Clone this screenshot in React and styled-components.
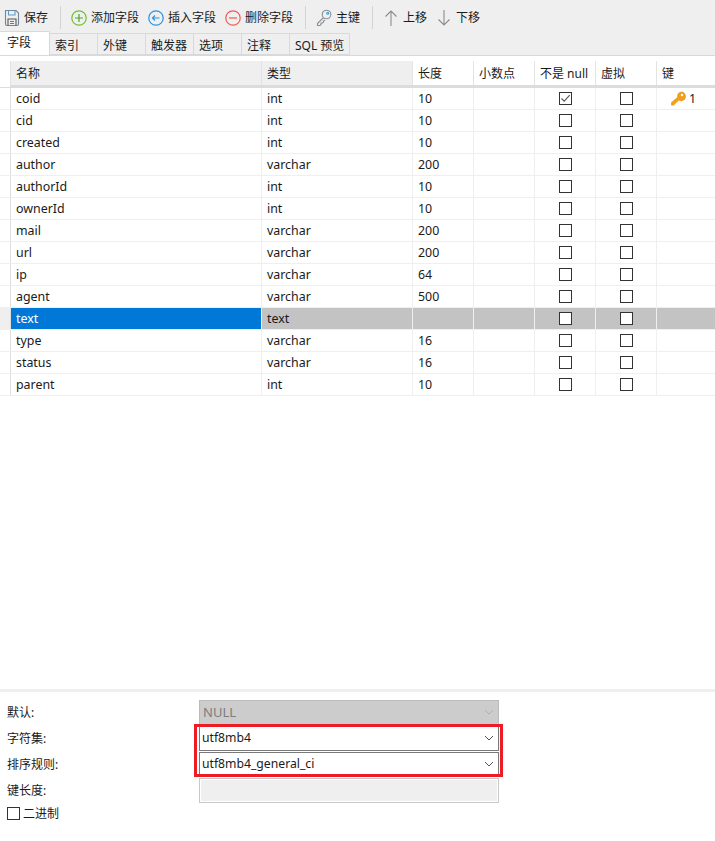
import React from 'react';
import styled, { createGlobalStyle } from 'styled-components';

const Global = createGlobalStyle`
  html, body { margin: 0; padding: 0; background: #fff; }
`;
const Page = styled.div`
  width: 715px; height: 841px; position: relative; overflow: hidden; display: flex; flex-direction: column;
  font-family: "Noto Sans", "Noto Sans CJK SC", sans-serif; font-size: 12px; color: #1a1a1a;
`;
const Top = styled.div`
  background: #efefef; height: 55px; border-bottom: 1px solid #d9d9d9; flex: none; display: flex; flex-direction: column;
`;
const Toolbar = styled.div`
  display: flex; align-items: center; height: 33px; padding: 2px 0 0 4px; box-sizing: border-box;
`;
const Tool = styled.div`
  display: flex; align-items: center; gap: ${p => p.$gap ?? 4}px; margin-right: ${p => p.$mr ?? 9}px; white-space: nowrap; line-height: 16px;
`;
const Sep = styled.div`
  width: 1px; height: 23px; background: #d4d4d4; margin-right: ${p => p.$r ?? 10}px; flex: none;
`;
const Tabs = styled.div`
  display: flex; height: 22px; align-items: flex-end;
`;
const Tab = styled.div`
  box-sizing: border-box; width: ${p => p.$w ?? 48}px; flex: none;
  height: ${p => p.$active ? 24 : 22}px; padding: ${p => p.$active ? '3px 0 0 7px' : '4px 0 0 5px'};
  background: ${p => p.$active ? '#fff' : '#efefef'};
  border-top: 1px solid #d9d9d9; border-right: 1px solid #d9d9d9;
  border-bottom: ${p => p.$active ? 'none' : '1px solid #d9d9d9'};
  line-height: 16px; white-space: nowrap; position: relative; z-index: ${p => p.$active ? 1 : 0};
`;
const Grid = styled.div`
  padding-top: 5px; flex: none;
`;
const cols = `10px 251px 151px 61px 61px 61px 61px 59px`;
const HeadRow = styled.div`
  display: grid; grid-template-columns: ${cols}; height: 26px;
`;
const HeadCell = styled.div`
  box-sizing: border-box; padding: 5px 0 0 5px; line-height: 16px; height: 24px; white-space: nowrap;
  background: ${p => p.$tint ? '#efefef' : '#fff'};
  border-left: 1px solid #e3e3e3;
`;
const HeadRule = styled.div`
  height: 3px; background: #dcdcdc; margin-top: -2px;
`;
const Row = styled.div`
  display: grid; grid-template-columns: ${cols}; height: 22px; box-sizing: border-box;
  border-bottom: 1px solid #efefef;
`;
const Gutter = styled.div`
  background: ${p => p.$sel ? '#efefef' : '#fff'};
`;
const Cell = styled.div`
  box-sizing: border-box; padding-left: ${p => p.$center ? 0 : 5}px; line-height: 21px; white-space: nowrap;
  font-size: 12.4px;
  border-left: 1px solid ${p => p.$first ? '#dfdfdf' : '#efefef'};
  background: ${p => p.$bg || 'transparent'};
  color: ${p => p.$fg || 'inherit'};
  display: flex; align-items: center;
  justify-content: ${p => p.$center ? 'center' : 'flex-start'};
`;
const Box = styled.span`
  box-sizing: border-box; width: 13px; height: 13px; border: 1px solid #333; background: #fff; display: block; flex: none;
  & > svg { display: block; }
`;
const KeyWrap = styled.div`
  display: flex; align-items: center; gap: 2px; padding-left: 8px;
`;
const Spacer = styled.div`
  flex: 1;
`;
const Bottom = styled.div`
  flex: none; height: 152px; box-sizing: border-box; border-top: 3px solid #efefef; padding: 7px 0 0 7px;
`;
const FormRow = styled.div`
  display: grid; grid-template-columns: 192px 300px; align-items: center; height: 26px;
`;
const Field = styled.div`
  box-sizing: border-box; height: 25px; border: 1px solid ${p => p.$border}; background: ${p => p.$bg};
  color: ${p => p.$fg || '#1a1a1a'}; display: flex; align-items: center; justify-content: space-between;
  padding: 0 4px ${p => p.$pb ?? 2}px ${p => p.$pl ?? 2}px; font-size: ${p => p.$size || 12.2}px;
  & > svg { margin-top: ${p => p.$pb ?? 2}px; }
`;
const Inset = styled.div`
  box-sizing: border-box; height: 25px; border: 1px solid #c8c8c8; padding: 1px; background: #fff;
  &::after { content: ""; display: block; height: 100%; background: #efefef; }
`;
const Binary = styled.div`
  display: flex; align-items: center; gap: 3px; height: 16px; margin-top: 2px;
`;
const Highlight = styled.div`
  position: absolute; left: 194px; top: 724px; width: 309px; height: 53px; box-sizing: border-box;
  border: 3px solid #ed1c24; pointer-events: none;
`;

const Save = () => (
  <svg width="16" height="18" viewBox="0 0 16 18" fill="none" strokeWidth="1.1">
    <path d="M1.500 1.500h10.500l2.500 2.500v11a1.500 1.500 0 0 1-1.500 1.500H3a1.500 1.500 0 0 1-1.500-1.500z" stroke="#6f8798" />
    <path d="M4.500 1.500v4.500h6.500V1.500" stroke="#5b9bd0" />
    <path d="M4 16.500v-6.500h8v6.500" stroke="#555" />
    <path d="M6 12.500h4M6 14.500h4" stroke="#777" />
  </svg>
);
const Circle = ({ color, mark, children }) => (
  <svg width="16" height="16" viewBox="0 0 16 16" fill="none" stroke={color} strokeWidth="1.2">
    <circle cx="8" cy="8" r="7.200" />
    <g stroke={mark || color}>{children}</g>
  </svg>
);
const KeyOutline = () => (
  <svg width="16" height="18" viewBox="0 0 16 18" fill="none" stroke="#8a8f94" strokeWidth="1.1">
    <circle cx="10.500" cy="5.500" r="4.300" />
    <circle cx="11.700" cy="4.300" r="1" stroke="#3aa0e0" />
    <path d="M7.500 8.500L1.500 14.500v2h2.500l1-1v-1.500h1.500l1-1v-1l1.500-1" />
  </svg>
);
const Arrow = ({ down }) => (
  <svg width="14" height="18" viewBox="0 0 14 18" fill="none" stroke="#8c8c8c" strokeWidth="1.1">
    {down
      ? <path d="M7 1v15M1.500 10.500L7 16l5.500-5.500" />
      : <path d="M7 17V2M1.500 7.500L7 2l5.500 5.500" />}
  </svg>
);
const GoldKey = () => (
  <svg width="17" height="15" viewBox="0 0 16 14" fill="#f0a01e">
    <path d="M10.500 0.500a4.500 4.500 0 1 1-2.300 8.400L3.500 13.500H1v-2.700l5.800-5A4.500 4.500 0 0 1 10.500 0.500z" />
    <circle cx="11.300" cy="3.700" r="1.100" fill="#fff" />
  </svg>
);
const Tick = () => (
  <svg width="11" height="11" viewBox="0 0 11 11" fill="none" stroke="#555" strokeWidth="1.1">
    <path d="M1.500 5.500l2.700 2.700L9.700 2.200" />
  </svg>
);
const Chevron = ({ color = '#555' }) => (
  <svg width="10" height="6" viewBox="0 0 10 6" fill="none" stroke={color} strokeWidth="1">
    <path d="M1 1l4 4 4-4" />
  </svg>
);

const rows = [
  ['coid', 'int', '10'], ['cid', 'int', '10'], ['created', 'int', '10'], ['author', 'varchar', '200'],
  ['authorId', 'int', '10'], ['ownerId', 'int', '10'], ['mail', 'varchar', '200'], ['url', 'varchar', '200'],
  ['ip', 'varchar', '64'], ['agent', 'varchar', '500'], ['text', 'text', ''], ['type', 'varchar', '16'],
  ['status', 'varchar', '16'], ['parent', 'int', '10'],
];
const heads = ['名称', '类型', '长度', '小数点', '不是 null', '虚拟', '键'];
const tabs = [['字段', 50], ['索引', 48], ['外键', 48], ['触发器', 48], ['选项', 48], ['注释', 48], ['SQL 预览', 60]];

export default function App() {
  return (
    <Page>
      <Global />
      <Top>
        <Toolbar>
          <Tool $mr={12}><Save />保存</Tool>
          <Sep />
          <Tool><Circle color="#6fc02a" mark="#4aa82a"><path d="M8 4v8M4 8h8" /></Circle>添加字段</Tool>
          <Tool><Circle color="#2a93e0"><path d="M11.500 8h-7M7 5.500L4.500 8 7 10.500" /></Circle>插入字段</Tool>
          <Tool $mr={12}><Circle color="#ef5b50"><path d="M4 8h8" /></Circle>删除字段</Tool>
          <Sep />
          <Tool $mr={12}><KeyOutline />主键</Tool>
          <Sep $r={11} />
          <Tool $gap={5} $mr={10}><Arrow />上移</Tool>
          <Tool $gap={5}><Arrow down />下移</Tool>
        </Toolbar>
        <Tabs>
          {tabs.map(([t, w], i) => <Tab key={t} $w={w} $active={i === 0}>{t}</Tab>)}
        </Tabs>
      </Top>
      <Grid>
        <HeadRow>
          <Gutter />
          {heads.map((h, i) => <HeadCell key={h} $tint={i < 2}>{h}</HeadCell>)}
        </HeadRow>
        <HeadRule />
        {rows.map(([n, t, l], i) => {
          const sel = n === 'text';
          const bg = sel ? '#c3c3c3' : undefined;
          return (
            <Row key={n}>
              <Gutter $sel={sel} />
              <Cell $first $bg={sel ? '#0078d7' : undefined} $fg={sel ? '#fff' : undefined}>{n}</Cell>
              <Cell $bg={bg}>{t}</Cell>
              <Cell $bg={bg}>{l}</Cell>
              <Cell $bg={bg} />
              <Cell $bg={bg} $center><Box>{i === 0 && <Tick />}</Box></Cell>
              <Cell $bg={bg} $center><Box /></Cell>
              <Cell $bg={bg}>{i === 0 && <KeyWrap><GoldKey />1</KeyWrap>}</Cell>
            </Row>
          );
        })}
      </Grid>
      <Spacer />
      <Bottom>
        <FormRow><span>默认:</span><Field $border="#bbb" $bg="#cccccc" $fg="#7d7d7d" $size={13} $pl={3} $pb={0}>NULL<Chevron color="#b0b0b0" /></Field></FormRow>
        <FormRow><span>字符集:</span><Field $border="#7a7a7a" $bg="#fff">utf8mb4<Chevron /></Field></FormRow>
        <FormRow><span>排序规则:</span><Field $border="#7a7a7a" $bg="#fff">utf8mb4_general_ci<Chevron /></Field></FormRow>
        <FormRow><span>键长度:</span><Inset /></FormRow>
        <Binary><Box />二进制</Binary>
      </Bottom>
      <Highlight />
    </Page>
  );
}
